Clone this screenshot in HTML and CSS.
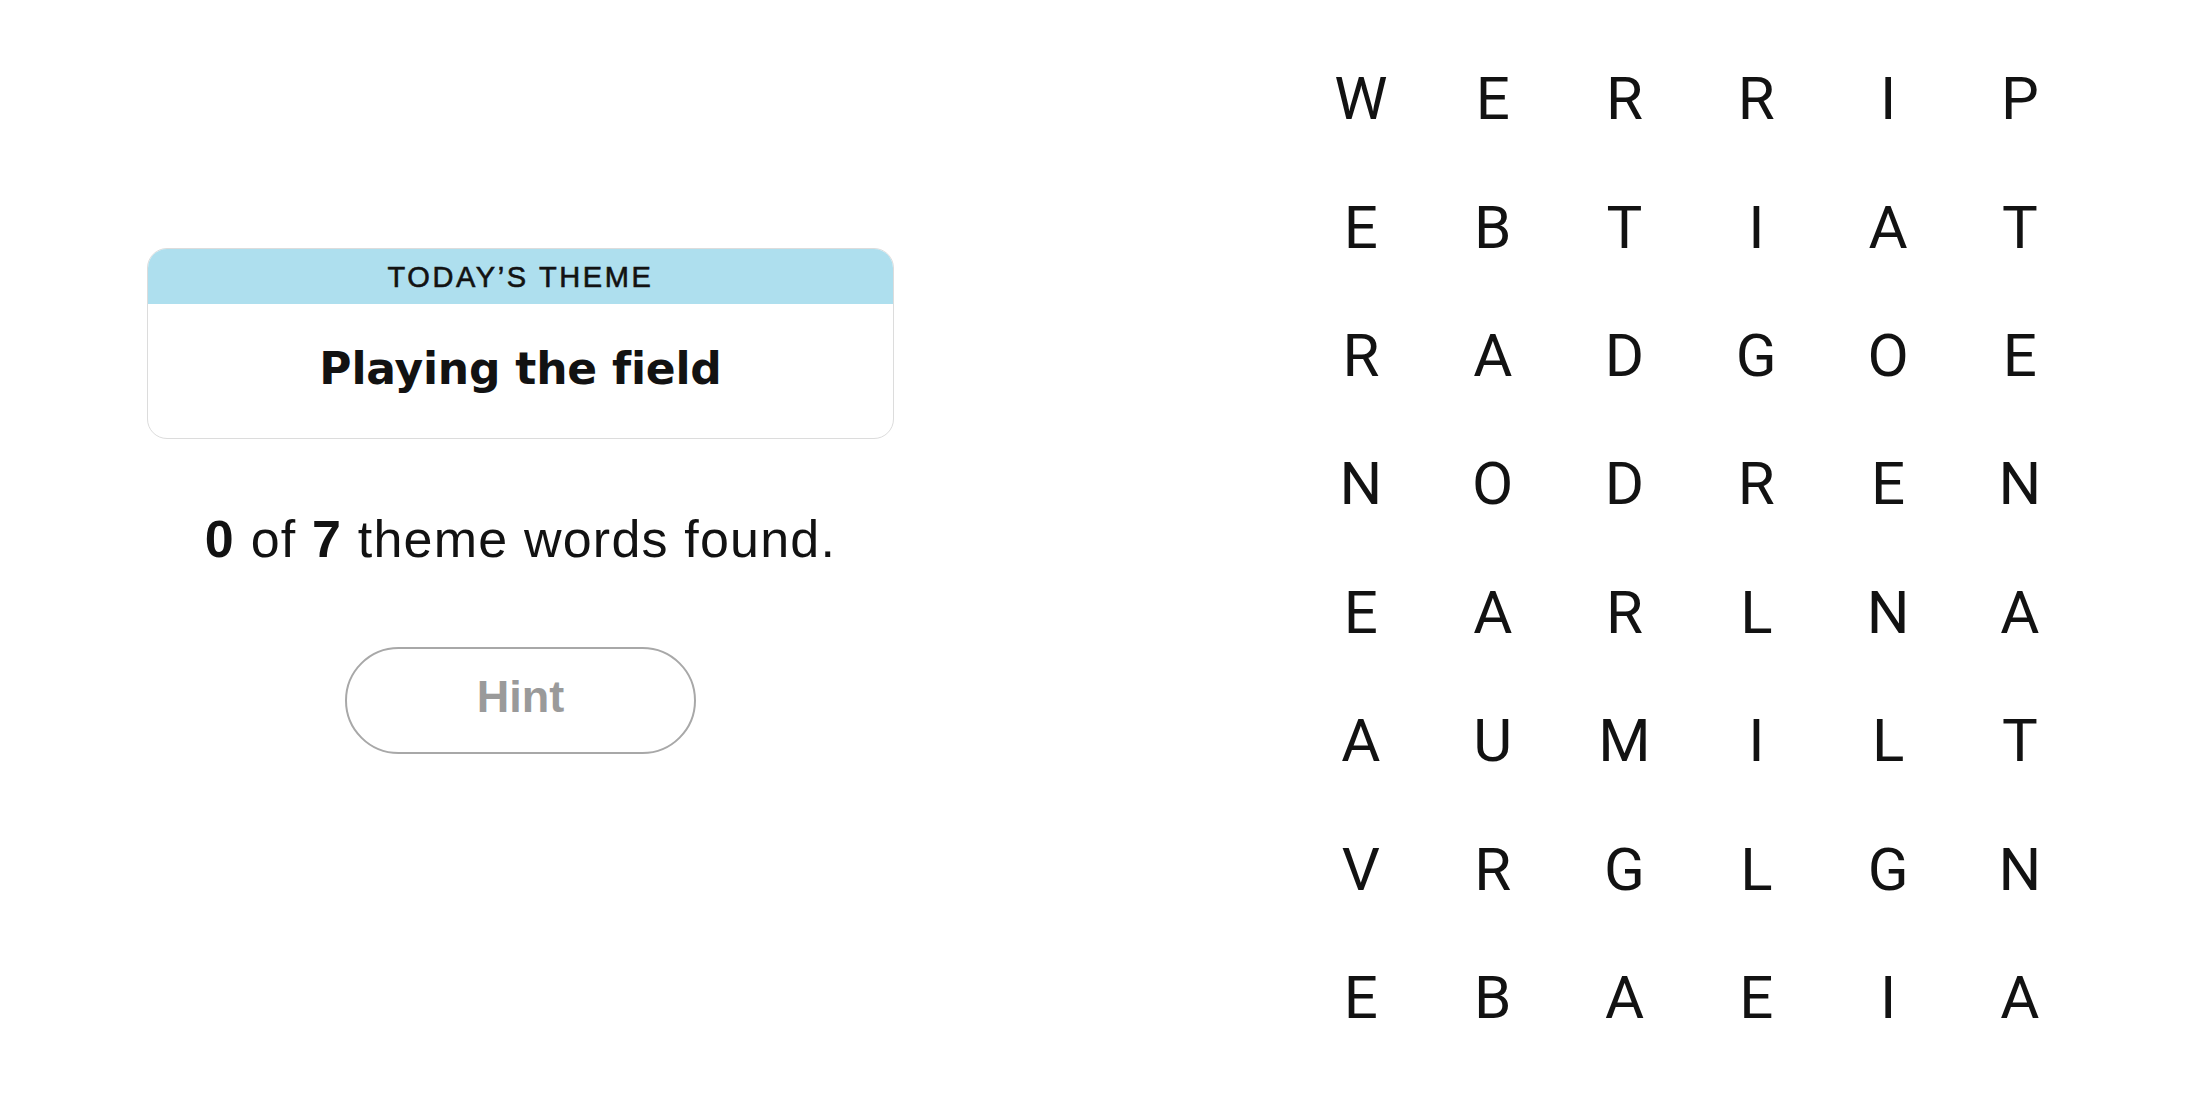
FILE: index.html
```html
<!DOCTYPE html>
<html lang="en">
<head>
<meta charset="utf-8">
<title>Strands</title>
<link rel="stylesheet" href="styles.css">
</head>
<body>
<main class="game">
  <section class="panel">
    <div class="theme-card">
      <div class="theme-header">TODAY’S THEME</div>
      <div class="theme-body">Playing the field</div>
    </div>
    <p class="progress"><b>0</b> of <b>7</b> theme words found.</p>
    <button class="hint" type="button">Hint</button>
  </section>
  <section class="board">
    <span>W</span><span>E</span><span>R</span><span>R</span><span>I</span><span>P</span>
    <span>E</span><span>B</span><span>T</span><span>I</span><span>A</span><span>T</span>
    <span>R</span><span>A</span><span>D</span><span>G</span><span>O</span><span>E</span>
    <span>N</span><span>O</span><span>D</span><span>R</span><span>E</span><span>N</span>
    <span>E</span><span>A</span><span>R</span><span>L</span><span>N</span><span>A</span>
    <span>A</span><span>U</span><span>M</span><span>I</span><span>L</span><span>T</span>
    <span>V</span><span>R</span><span>G</span><span>L</span><span>G</span><span>N</span>
    <span>E</span><span>B</span><span>A</span><span>E</span><span>I</span><span>A</span>
  </section>
</main>
</body>
</html>
```

FILE: styles.css
```css
html, body {
  margin: 0;
  padding: 0;
  background: #ffffff;
}

body {
  font-family: "Liberation Sans", Arial, sans-serif;
  color: #121212;
}

.game {
  display: flex;
  align-items: flex-start;
  gap: 401px;
  padding-left: 147px;
  width: 2200px;
  height: 1100px;
  box-sizing: border-box;
}

.panel {
  width: 747px;
  margin-top: 248px;
  display: flex;
  flex-direction: column;
  align-items: center;
}

.theme-card {
  width: 100%;
  box-sizing: border-box;
  border: 1px solid #dcdcdc;
  border-radius: 20px;
  overflow: hidden;
}

.theme-header {
  height: 55px;
  background: #aedfee;
  display: flex;
  align-items: center;
  justify-content: center;
  font-size: 29px;
  letter-spacing: 2.6px;
  font-weight: 400;
  -webkit-text-stroke: 0.6px #121212;
  padding-top: 2px;
  box-sizing: border-box;
}

.theme-body {
  height: 134px;
  box-sizing: border-box;
  padding-bottom: 6px;
  display: flex;
  align-items: center;
  justify-content: center;
  font-family: "DejaVu Sans", "Liberation Sans", sans-serif;
  font-size: 44px;
  font-weight: 700;
  letter-spacing: -0.2px;
}

.progress {
  margin: 74px 0 0;
  font-size: 52px;
  line-height: 52px;
  letter-spacing: 1.2px;
}

.progress b {
  font-weight: 700;
}

.hint {
  margin-top: 82px;
  width: 351px;
  height: 107px;
  border: 2.5px solid #a8a8a8;
  border-radius: 54px;
  background: #ffffff;
  color: #9a9a9a;
  font-family: "Liberation Sans", Arial, sans-serif;
  font-size: 45px;
  font-weight: 700;
  padding: 0 0 8px;
  display: flex;
  align-items: center;
  justify-content: center;
}

.board {
  margin-top: 35px;
  display: grid;
  grid-template-columns: repeat(6, 131.8px);
  grid-auto-rows: 128.4px;
}

.board span {
  display: flex;
  align-items: center;
  justify-content: center;
  font-family: Roboto, "Liberation Sans", sans-serif;
  font-size: 60px;
  line-height: 1;
  color: #121212;
}
```
